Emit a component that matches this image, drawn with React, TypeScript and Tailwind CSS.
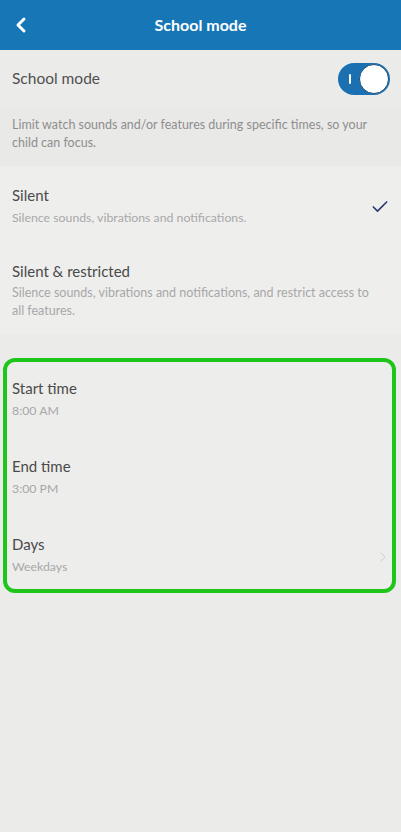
import { ChevronLeft, ChevronRight, Check } from "lucide-react";

function Row({ title, sub, right }: { title: string; sub: string; right?: React.ReactNode }) {
  return (
    <div className="flex items-center justify-between pl-[5px] pr-[1px]">
      <div className="flex flex-col gap-[6px]">
        <p className="text-[15px] leading-[18px] text-[#4a4a4a]">{title}</p>
        <p className="text-[12.3px] leading-[16px] text-[#a8a8a8]">{sub}</p>
      </div>
      {right}
    </div>
  );
}

export default function App() {
  return (
    <div className="w-[401px] h-[832px] bg-[#ebebea] flex flex-col" style={{ fontFamily: "Lato, 'Open Sans', sans-serif" }}>
      <header className="h-[50px] bg-[#1676b6] flex items-center relative shrink-0">
        <ChevronLeft className="absolute left-[9px] text-white" size={24} strokeWidth={3} />
        <h1 className="w-full text-center text-white text-[16px] font-bold">School mode</h1>
      </header>

      <div className="h-[58px] flex items-center justify-between px-3 bg-[#ebebea]">
        <p className="text-[15.5px] text-[#505050]">School mode</p>
        <div className="w-[52px] h-[32px] rounded-full bg-[#1a70b0] relative flex items-center -mr-[1px]">
          <span className="absolute left-[11px] w-[2px] h-[10px] bg-white rounded" />
          <span className="absolute right-[1px] w-[30px] h-[30px] rounded-full bg-white border border-[#1a4f7a]" />
        </div>
      </div>

      <div className="h-[58px] px-3 pt-[8px] bg-[#e9e9e8]">
        <p className="text-[12.5px] leading-[18px] text-[#8e8e8e]">
          Limit watch sounds and/or features during specific times, so your child can focus.
        </p>
      </div>

      <div className="bg-[#eeeeed] pb-[14px]">
        <div className="flex items-center justify-between px-3 pt-[20px] pb-[14px]">
          <div className="flex flex-col gap-[6px]">
            <p className="text-[15px] leading-[18px] text-[#4a4a4a]">Silent</p>
            <p className="text-[12.3px] leading-[16px] text-[#a8a8a8]">Silence sounds, vibrations and notifications.</p>
          </div>
          <Check className="text-[#2c3a6e] -mr-[1px] mt-[2px]" size={20} strokeWidth={2} />
        </div>
        <div className="flex flex-col gap-[4px] pl-3 pr-[30px] pt-[22px]">
          <p className="text-[15px] leading-[18px] text-[#4a4a4a]">Silent &amp; restricted</p>
          <p className="text-[12.5px] leading-[18px] text-[#a8a8a8]">
            Silence sounds, vibrations and notifications, and restrict access to all features.
          </p>
        </div>
      </div>

      <div className="h-[24px]" />

      <div className="mx-[3px] w-[393px] h-[235px] border-[4px] border-[#1ec51a] rounded-[12px] bg-[#ededec] flex flex-col gap-[38px] pt-[17px]">
        <Row title="Start time" sub="8:00 AM" />
        <Row title="End time" sub="3:00 PM" />
        <Row
          title="Days"
          sub="Weekdays"
          right={<ChevronRight className="text-[#cfcfcf] mt-[4px]" size={16} strokeWidth={1.5} />}
        />
      </div>
    </div>
  );
}
